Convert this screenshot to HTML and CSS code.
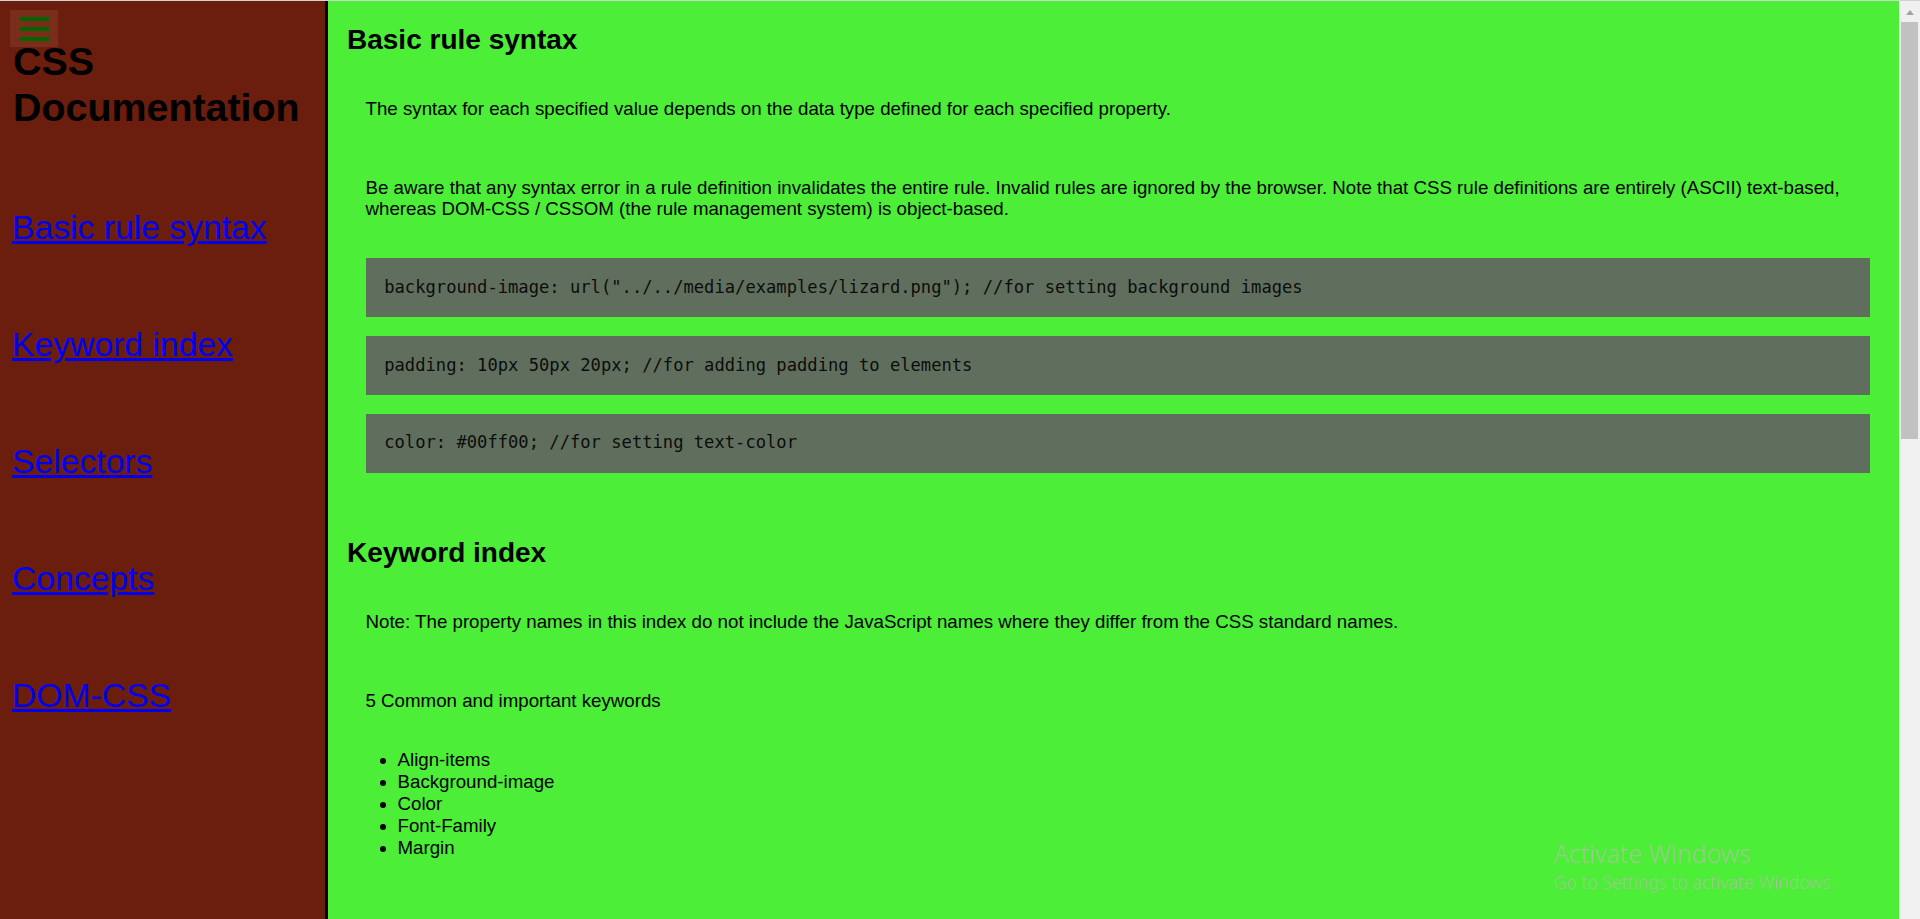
FILE: index.html
```html
<!DOCTYPE html>
<html lang="en">
<head>
<meta charset="utf-8">
<title>CSS Documentation</title>
<link rel="stylesheet" href="styles.css">
</head>
<body>
<div class="page">
  <nav class="sidebar" id="navbar">
    <button class="menu-btn" type="button" aria-label="Menu">
      <span class="menu-bar"></span>
      <span class="menu-bar"></span>
      <span class="menu-bar"></span>
    </button>
    <header><h1 class="brand">CSS Documentation</h1></header>
    <a class="nav-link" href="#Basic_rule_syntax">Basic rule syntax</a>
    <a class="nav-link" href="#Keyword_index">Keyword index</a>
    <a class="nav-link" href="#Selectors">Selectors</a>
    <a class="nav-link" href="#Concepts">Concepts</a>
    <a class="nav-link" href="#DOM-CSS">DOM-CSS</a>
  </nav>

  <main class="main" id="main-doc">
    <section class="doc-section" id="Basic_rule_syntax">
      <h2 class="sec-title">Basic rule syntax</h2>
      <p class="sec-text">The syntax for each specified value depends on the data type defined for each specified property.</p>
      <p class="sec-text">Be aware that any syntax error in a rule definition invalidates the entire rule. Invalid rules are ignored by the browser. Note that CSS rule definitions are entirely (ASCII) text-based, whereas DOM-CSS / CSSOM (the rule management system) is object-based.</p>
      <div class="code-list">
        <code class="code">background-image: url("../../media/examples/lizard.png"); //for setting background images</code>
        <code class="code">padding: 10px 50px 20px; //for adding padding to elements</code>
        <code class="code">color: #00ff00; //for setting text-color</code>
      </div>
    </section>

    <section class="doc-section" id="Keyword_index">
      <h2 class="sec-title">Keyword index</h2>
      <p class="sec-text">Note: The property names in this index do not include the JavaScript names where they differ from the CSS standard names.</p>
      <p class="sec-text">5 Common and important keywords</p>
      <ul class="key-list">
        <li>Align-items</li>
        <li>Background-image</li>
        <li>Color</li>
        <li>Font-Family</li>
        <li>Margin</li>
      </ul>
    </section>

    <section class="doc-section" id="Selectors">
      <h2 class="sec-title">Selectors</h2>
      <p class="sec-text">Selectors define to which elements a set of CSS rules applies.</p>
      <p class="sec-text">Basic selectors, grouping selectors and combinators:</p>
      <div class="code-list">
        <code class="code">p { color: red; } //type selector, selects all p elements</code>
        <code class="code">.index { margin: 0; } //class selector, selects elements with class "index"</code>
        <code class="code">#toc { display: block; } //ID selector, selects the element with id "toc"</code>
      </div>
    </section>

    <section class="doc-section" id="Concepts">
      <h2 class="sec-title">Concepts</h2>
      <p class="sec-text">The following concepts are central to understanding how CSS works.</p>
      <p class="sec-text">Core concepts</p>
      <ul class="key-list">
        <li>Syntax</li>
        <li>Comments</li>
        <li>Specificity</li>
        <li>Inheritance</li>
      </ul>
    </section>

    <section class="doc-section" id="DOM-CSS">
      <h2 class="sec-title">DOM-CSS</h2>
      <p class="sec-text">The CSS Object Model lets scripts read and modify CSS styles dynamically.</p>
      <div class="code-list">
        <code class="code">document.getElementById("main-doc").style.color = "red"; //setting a style with JavaScript</code>
      </div>
    </section>
  </main>
</div>

<div class="scrollbar" aria-hidden="true">
  <span class="sb-arrow"></span>
  <span class="sb-thumb"></span>
</div>

<div class="watermark" aria-hidden="true">
  <div class="wm-title">Activate Windows</div>
  <div class="wm-sub">Go to Settings to activate Windows.</div>
</div>
</body>
</html>
```

FILE: styles.css
```css
html {
  background: #4cee37;
  scrollbar-width: none;
}

::-webkit-scrollbar {
  width: 0;
  height: 0;
}

body {
  margin: 0;
  border-top: 1px solid #d2d2d2;
  font-family: "Liberation Sans", Arial, sans-serif;
  color: #000;
  background: #4cee37;
  display: flex;
  align-items: flex-start;
}

.page {
  flex: 1 1 auto;
  min-width: 0;
  display: grid;
  grid-template-columns: 328px 1fr;
  align-items: stretch;
}

/* Sidebar */
.sidebar {
  position: relative;
  box-sizing: border-box;
  min-height: 100vh;
  background: #6b1d0e;
  border-right: 3px solid #000;
  padding: 37px 11px 40px 12px;
  display: flex;
  flex-direction: column;
  align-items: flex-start;
  gap: 78px;
}

.menu-btn {
  position: absolute;
  top: 9px;
  left: 10px;
  width: 48px;
  height: 37px;
  box-sizing: border-box;
  margin: 0;
  padding: 7px 0 0 9px;
  border: 0;
  background: #7b2d1b;
  display: flex;
  flex-direction: column;
  align-items: flex-start;
  gap: 6px;
  z-index: 2;
}

.menu-bar {
  display: block;
  width: 31px;
  height: 4px;
  border-radius: 2px;
  background: #006600;
}

.brand {
  margin: 0 0 0 1px;
  font-size: 39.4px;
  line-height: 46px;
  font-weight: bold;
  color: #000;
}

.nav-link {
  font-size: 33.7px;
  line-height: 39px;
  color: #0000ee;
  text-decoration: underline;
}

/* Main */
.main {
  min-width: 0;
  padding: 0 18px 8px 19px;
  display: flex;
  flex-direction: column;
}

.doc-section {
  display: flex;
  flex-direction: column;
}

.doc-section + .doc-section {
  margin-top: 42px;
}

.sec-title {
  margin: 22.5px 0 0 0;
  font-size: 28px;
  line-height: 32.2px;
  font-weight: bold;
}

.sec-text {
  margin: 42.1px 11px 0 18.5px;
  font-size: 18.72px;
  line-height: 21.5px;
}

.sec-text + .sec-text {
  margin-top: 57.5px;
}

.code-list {
  margin: 38.5px 11px 0 18.5px;
  display: flex;
  flex-direction: column;
  gap: 18.72px;
}

.code {
  display: block;
  background: #606f5d;
  padding: 18.72px;
  font-family: "DejaVu Sans Mono", "Liberation Mono", monospace;
  font-size: 17.15px;
  line-height: 21.5px;
  color: #0c0c0c;
  white-space: pre;
}

.key-list {
  margin: 37.6px 11px 0 18.5px;
  padding-left: 32px;
  font-size: 18.72px;
  line-height: 21.8px;
}

/* Browser scrollbar (static picture of the window chrome) */
.scrollbar {
  position: sticky;
  top: 0;
  flex: 0 0 21px;
  height: 100vh;
  background: #f0f0f0;
  display: flex;
  flex-direction: column;
  align-items: center;
}

.sb-arrow {
  display: block;
  width: 0;
  height: 0;
  margin-top: 9px;
  border-left: 4.5px solid transparent;
  border-right: 4.5px solid transparent;
  border-bottom: 5px solid #a3a3a3;
}

.sb-thumb {
  display: block;
  width: 17px;
  height: 417px;
  margin-top: 7px;
  background: #c1c1c1;
}

/* OS watermark overlay */
.watermark {
  position: fixed;
  left: 1554px;
  top: 839px;
  pointer-events: none;
  color: #9fc793;
  font-family: "Noto Sans", "Open Sans", sans-serif;
  font-weight: 300;
}

.wm-title {
  font-size: 24.9px;
  line-height: 28px;
}

.wm-sub {
  margin-top: 4px;
  font-size: 17.6px;
  line-height: 22px;
}
```
